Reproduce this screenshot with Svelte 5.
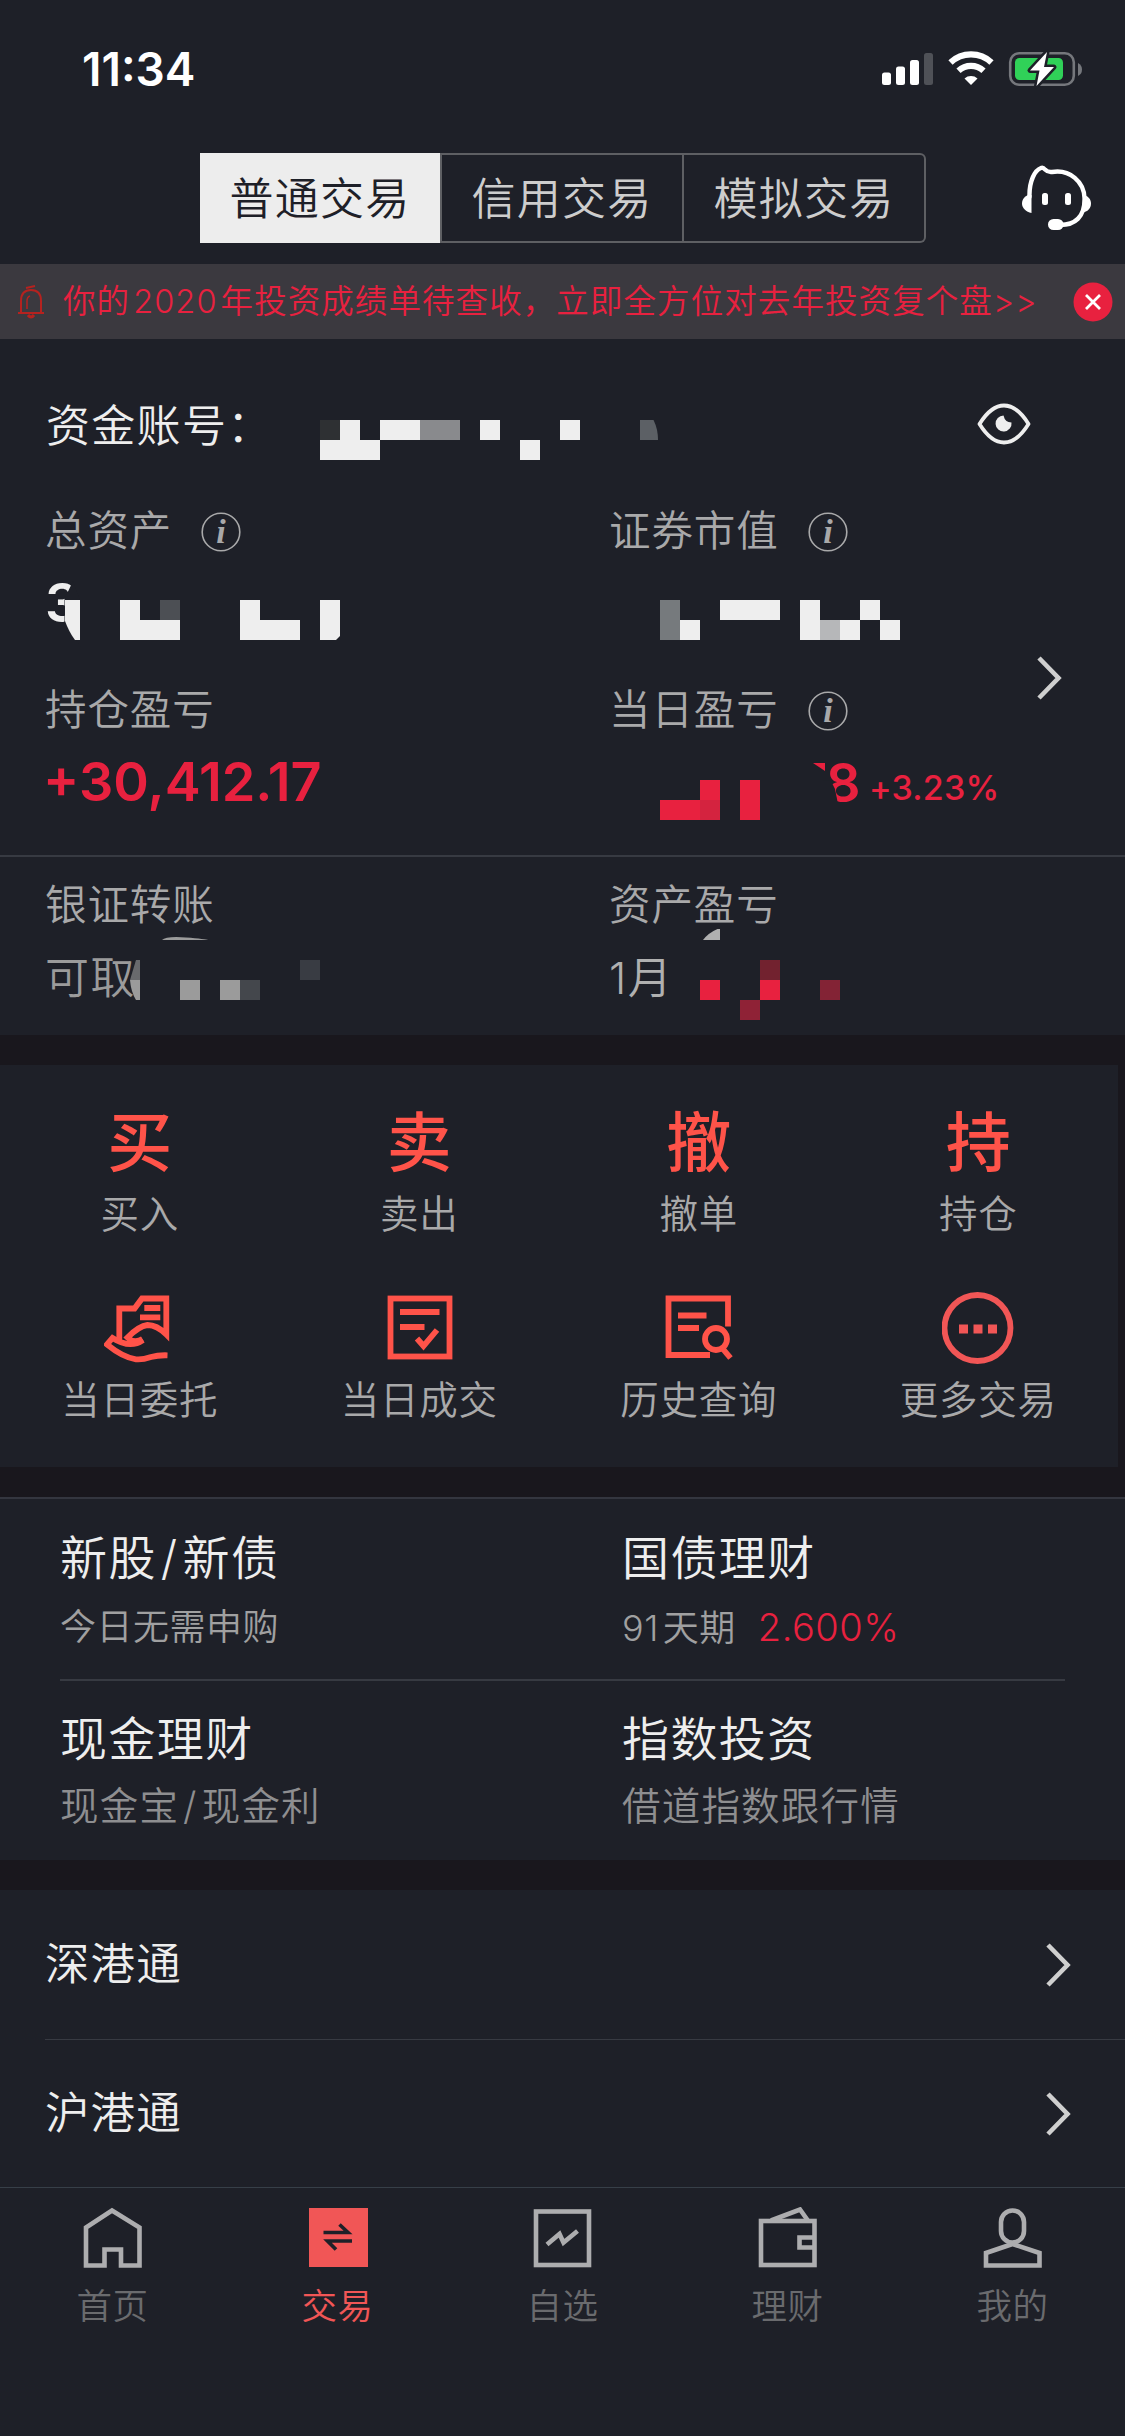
<script lang="ts">
  type Cell = [x: number, y: number, w: number, h: number, fill?: string];

  const modes = ['普通交易', '信用交易', '模拟交易'];
  let mode = $state('普通交易');

  // Masked figures are drawn as pixel blocks, in coordinates of their own row.
  const accountMask: Cell[] = [
    [0, 0, 20, 20, '#2e3033'],
    [20, 0, 20, 20],
    [60, 0, 40, 20],
    [100, 0, 40, 20, '#898a8d'],
    [160, 0, 20, 20],
    [240, 0, 20, 20],
    [0, 20, 60, 20],
    [200, 20, 20, 20],
  ];
  const totalMask: Cell[] = [
    [75, 45, 20, 40],
    [95, 65, 40, 20],
    [115, 45, 20, 20, '#4c4f54'],
    [195, 45, 20, 40],
    [215, 65, 40, 20],
  ];
  const marketMask: Cell[] = [
    [51, 45, 20, 40, '#767a7d'],
    [71, 65, 20, 20],
    [111, 45, 60, 20],
    [191, 45, 20, 40],
    [211, 65, 20, 20, '#b6b7b9'],
    [231, 65, 20, 20],
    [251, 45, 20, 20],
    [271, 65, 20, 20],
  ];
  const dayMask: Cell[] = [
    [91, 46, 20, 20],
    [51, 66, 40, 20],
    [91, 66, 20, 20, '#d4233f'],
    [131, 46, 20, 40],
  ];
  const cashMask: Cell[] = [
    [135, 51, 20, 20],
    [175, 51, 20, 20],
    [195, 51, 20, 20, '#44474c'],
    [255, 31, 20, 20, '#393c43'],
  ];
  const monthMask: Cell[] = [
    [91, 51, 20, 20],
    [151, 31, 20, 20, '#72222f'],
    [151, 51, 20, 20],
    [131, 71, 20, 20, '#8f2236'],
    [211, 51, 20, 20, '#832335'],
  ];

  const actions = [
    { glyph: '买', label: '买入' },
    { glyph: '卖', label: '卖出' },
    { glyph: '撤', label: '撤单' },
    { glyph: '持', label: '持仓' },
    { icon: 'order', label: '当日委托' },
    { icon: 'deal', label: '当日成交' },
    { icon: 'history', label: '历史查询' },
    { icon: 'more', label: '更多交易' },
  ];

  const products = [
    [
      { title: '新股/新债', note: '今日无需申购' },
      { title: '国债理财', note: '91天期', rate: '2.600%' },
    ],
    [
      { title: '现金理财', note: '现金宝/现金利' },
      { title: '指数投资', note: '借道指数跟行情' },
    ],
  ];

  const links = ['深港通', '沪港通'];

  const navs = [
    { icon: 'home', label: '首页' },
    { icon: 'trade', label: '交易' },
    { icon: 'chart', label: '自选' },
    { icon: 'wallet', label: '理财' },
    { icon: 'me', label: '我的' },
  ];
  let nav = $state('trade');

  // Split off digits and slashes so they get some air next to the hanzi.
  const parts = (s: string) => s.split(/(\d+|\/)/).filter(Boolean);
</script>

{#snippet spaced(s: string)}{#each parts(s) as p, i}{#if /^[\d/]/.test(p)}<i class:lead={i === 0}>{p}</i>{:else}{p}{/if}{/each}{/snippet}

{#snippet cells(list: Cell[])}
  {#each list as [x, y, w, h, fill]}
    <rect {x} {y} width={w} height={h} fill={fill ?? 'currentColor'} shape-rendering="crispEdges" />
  {/each}
{/snippet}

{#snippet info()}
  <svg class="info" width="40" height="40" viewBox="0 0 40 40">
    <circle cx="20" cy="20" r="18.8" fill="none" stroke="currentColor" stroke-width="1.6" />
    <text x="20" y="31" text-anchor="middle">i</text>
  </svg>
{/snippet}

{#snippet chevron()}
  <svg class="chevron" width="27" height="44" viewBox="0 0 27 44">
    <path d="M2 2 L21.500 22 L2 42" fill="none" stroke="#cfcfcf" stroke-width="4.600" />
  </svg>
{/snippet}

<main>
  <div class="status">
    <span class="time">11:34</span>
    <svg width="202" height="40" viewBox="0 0 202 40">
      <g fill="#fff">
        <rect x="2" y="23.500" width="9" height="12.500" rx="2.500" />
        <rect x="16" y="17.500" width="9" height="18.500" rx="2.500" />
        <rect x="30" y="11" width="9" height="25" rx="2.500" />
        <rect x="44" y="4" width="9" height="32" rx="2.500" opacity="0.22" />
        <path d="M91 36 L84.500 29.500 A 10 10 0 0 1 97.500 29.500 Z" />
      </g>
      <g fill="none" stroke="#fff" stroke-width="6.200">
        <path d="M78.500 21.800 A 18.500 18.500 0 0 1 103.500 21.800" />
        <path d="M70.500 13.500 A 30 30 0 0 1 111.500 13.500" />
      </g>
      <rect x="130.200" y="4.200" width="63.600" height="31.600" rx="9" fill="none" stroke="#75777c" stroke-width="2.600" />
      <path d="M198 14 v13 q4 -2 4 -6.500 t-4 -6.500z" fill="#75777c" />
      <rect x="135" y="9" width="48" height="22" rx="4.500" fill="#30d158" />
      <path
        d="M167 3 L150 21.500 H159.500 L156.500 37 L174 18 H164 Z"
        fill="#fff"
        stroke="#1e2028"
        stroke-width="5"
        stroke-linejoin="round"
        paint-order="stroke"
      />
    </svg>
  </div>

  <header>
    <div class="modes">
      {#each modes as m (m)}
        <button class:active={mode === m} onclick={() => (mode = m)}>{m}</button>
      {/each}
    </div>
    <svg class="service" width="70" height="66" viewBox="0 0 70 66">
      <g fill="none" stroke="#fff" stroke-width="4.400" stroke-linejoin="round" stroke-linecap="round">
        <path d="M7.500 32 C7 16 13 5 19 3 Q21 2 23 4.500 Q26 7.500 30 7 C48 4 62 17 62.500 33 C63 52 53 60 38 60" />
      </g>
      <g fill="#fff">
        <path d="M9.500 30 V48 C4 47 0 43 0 38.500 C0 34 3 31 7 29.500 Z" />
        <path d="M61 29.500 C66 31 69 34 69 38.500 C69 43 66 46.500 61 47.500 Z" />
        <rect x="20" y="28" width="6" height="12" rx="2.500" />
        <rect x="43" y="28" width="6" height="12" rx="2.500" />
        <rect x="26" y="54" width="15.500" height="11" rx="5.500" />
      </g>
    </svg>
  </header>

  <div class="notice">
    <svg width="28" height="36" viewBox="0 0 28 36" fill="none" stroke="#b5221f" stroke-width="2">
      <path d="M4 28 V17 C4 9 8 6 14 6 C20 6 24 9 24 17 V28" />
      <path d="M1 29 H27" />
      <path d="M9 4 L18 2" />
      <path d="M10 25 V17 Q10 13 13 12" stroke-width="1.500" />
      <path d="M11 31 Q14 35 17 31" stroke-width="3" />
    </svg>
    <span class="msg">{@render spaced('你的2020年投资成绩单待查收，立即全方位对去年投资复个盘>>')}</span>
    <svg class="close" width="40" height="40" viewBox="0 0 40 40">
      <circle cx="20" cy="20" r="19.500" fill="#e8213f" />
      <path d="M13 13 L27 27 M27 13 L13 27" stroke="#fff" stroke-width="2.800" />
    </svg>
  </div>

  <section class="account">
    <div class="number">
      <span>资金账号：</span>
      <svg class="mask" width="340" height="80" viewBox="0 -36 340 80">
        {@render cells(accountMask)}
        <path d="M320 0 h13.500 q4.500 9 4.500 20 h-18z" fill="#5c6065" />
      </svg>
      <svg class="eye" width="54" height="42" viewBox="0 0 54 42">
        <path
          d="M2.500 21 Q14 2.500 27 2.500 T51.500 21 Q40 39.500 27 39.500 T2.500 21z"
          fill="none"
          stroke="#eee"
          stroke-width="3.800"
          stroke-linejoin="round"
        />
        <path d="M26.500 12.500 A8 8 0 1 0 34.500 19.500 Q28 19.500 26.500 12.500z" fill="#eee" />
      </svg>
    </div>

    <div class="assets">
      <div class="col left">
        <div class="label">总资产 {@render info()}</div>
        <svg class="mask" width="500" height="94" viewBox="0 0 500 94">
          <text x="0" y="67" class="big">3</text>
          <path d="M28 26 L36 48 V92 L19 67.500 L19.500 66 V44 Z" fill="#1e2028" />
          <path d="M20 45 H35 V85 H30 Q24 77 20 66 Z" fill="currentColor" />
          {@render cells(totalMask)}
          <path d="M275 45 h20 v36 l-4 4 h-16z" fill="currentColor" />
        </svg>
        <div class="label second">持仓盈亏</div>
        <div class="profit">+30,412.17</div>
      </div>
      <div class="col">
        <div class="label">证券市值 {@render info()}</div>
        <svg class="mask" width="400" height="94" viewBox="0 0 400 94">
          {@render cells(marketMask)}
        </svg>
        <div class="label second">当日盈亏 {@render info()}</div>
        <svg class="mask up" width="400" height="96" viewBox="0 0 400 96">
          {@render cells(dayMask)}
          <path d="M204 29 h12 v8z" fill="currentColor" />
          <text x="217" y="67.500" class="big">8</text>
          <path d="M214 46 L222 47 L226 55 L229 70 L214 70 Z" fill="#1e2028" />
          <text x="260" y="66" class="pct">+3.23%</text>
        </svg>
      </div>
      {@render chevron()}
    </div>
  </section>

  <section class="transfer">
    <div class="col left">
      <div class="label">银证转账</div>
      <svg class="mask gray" width="500" height="90" viewBox="0 0 500 90">
        <path d="M117 11 q4 -4 24 -2.500 t22 2.500z" fill="currentColor" />
        <text x="0" y="65" class="mid">可取</text>
        <path d="M91 31 h4 v20 h-10z" fill="#696a6d" />
        <path d="M85 51 h10 v20 h-4 q-5 -8 -6 -20z" fill="currentColor" />
        {@render cells(cashMask)}
      </svg>
    </div>
    <div class="col">
      <div class="label">资产盈亏</div>
      <svg class="mask up" width="400" height="91" viewBox="0 0 400 91">
        <path d="M94 11 q6 -8 17 -12 v12z" fill="#b0b0b0" />
        <text x="0" y="65" class="mid light">1月</text>
        {@render cells(monthMask)}
      </svg>
    </div>
  </section>

  <section class="actions">
    {#each actions as a (a.label)}
      <div class="action">
        <div class="pic">
          {#if a.glyph}
            {a.glyph}
          {:else if a.icon === 'order'}
            <svg width="72" height="72" viewBox="0 0 72 72">
              <path d="M15.300 48 V16.500 H30.500 L38 6.500 H62.300 V42.500 Q53 33 43.500 33 Q35 34 23.500 45.500 Q30 52 38.500 47" />
              <path d="M39 48 Q26 57 8.500 46 L3 52.500 Q19 65.500 32 67.300 Q38 68 47 65 Q54 63 63.500 63.300" />
              <path d="M40.300 16 H56.300 M36 25.300 H56.300" />
            </svg>
          {:else if a.icon === 'deal'}
            <svg width="72" height="72" viewBox="0 0 72 72">
              <rect x="7.500" y="6.500" width="59" height="58" />
              <path d="M17 20 H56.500 M17 35 H41.500 M34 46.500 L40.500 54 L54 38" />
            </svg>
          {:else if a.icon === 'history'}
            <svg width="72" height="72" viewBox="0 0 72 72">
              <path d="M65 34.500 V6.500 H5.500 V63 H47" />
              <path d="M15 23.500 H43.500 M15 36 H36" />
              <circle cx="53" cy="47" r="11" />
              <path d="M59.500 56.500 L67.500 66" />
            </svg>
          {:else}
            <svg width="72" height="72" viewBox="0 0 72 72" class="more">
              <circle cx="35.500" cy="36" r="33" />
              <path class="dots" d="M17 37 h9 M31.500 37 h9 M46 37 h9" />
            </svg>
          {/if}
        </div>
        <div class="name">{a.label}</div>
      </div>
    {/each}
  </section>

  <section class="products">
    {#each products as row}
      <div class="row">
        {#each row as p (p.title)}
          <div class="product">
            <div class="title">{@render spaced(p.title)}</div>
            <div class="note">{@render spaced(p.note)}{#if p.rate}<b>{p.rate}</b>{/if}</div>
          </div>
        {/each}
      </div>
    {/each}
  </section>

  <section class="links">
    {#each links as l (l)}
      <div class="link">
        <span>{l}</span>
        {@render chevron()}
      </div>
    {/each}
  </section>

  <nav>
    {#each navs as n (n.icon)}
      <button class:active={nav === n.icon} onclick={() => (nav = n.icon)}>
        <svg width="60" height="62" viewBox="0 0 60 62">
          {#if n.icon === 'home'}
            <path d="M3 58.500 V20.500 L29 3.500 L56.500 20.500 V58.500 H38 V42.500 H21.500 V58.500 Z" />
          {:else if n.icon === 'trade'}
            <rect x="1" y="1" width="59" height="59" fill="#f15656" stroke="none" />
            <path d="M15.500 25.500 H40 L31.500 17.500 M44 34 H19.500 L28 42.500" stroke="#1e2028" stroke-width="3.600" />
          {:else if n.icon === 'chart'}
            <rect x="3" y="4.500" width="53" height="53.500" />
            <path d="M14 37.500 L26.500 27 L30.500 35.500 L44.500 24" stroke-width="4.600" />
          {:else if n.icon === 'wallet'}
            <rect x="3" y="14" width="53.500" height="44" />
            <path d="M13 13.500 L42 2.500 L49.500 13" />
            <path d="M56.500 30.500 H41.500 V40.500 H56.500" />
          {:else}
            <rect x="18" y="3.500" width="23" height="32" rx="11.500" />
            <path d="M29.500 37 L56.500 46 V58.500 H3 V46 Z" />
          {/if}
        </svg>
        <span>{n.label}</span>
      </button>
    {/each}
  </nav>
</main>

<style>
  :global(body) {
    margin: 0;
    background: #1e2028;
  }
  main {
    width: 1125px;
    height: 2436px;
    overflow: hidden;
    display: flex;
    flex-direction: column;
    background: #1e2028;
    color: #eee;
    font-family: Inter, 'Noto Sans CJK SC', sans-serif;
    font-weight: 350;
    line-height: 1;
  }
  main > * {
    box-sizing: border-box;
    flex: none;
  }
  svg {
    display: block;
    flex: none;
  }
  button {
    border: 0;
    padding: 0;
    background: none;
    color: inherit;
    font: inherit;
  }
  i {
    font-style: normal;
    margin: 0 4px;
  }
  i.lead {
    margin-left: 0;
  }

  .status {
    height: 138px;
    padding: 0 43px 0 82px;
    display: flex;
    justify-content: space-between;
    align-items: center;
    color: #fff;
  }
  .time {
    font-size: 46px;
    font-weight: 600;
  }

  header {
    height: 126px;
    padding: 15px 33px 0 200px;
    display: flex;
    justify-content: space-between;
    align-items: flex-start;
  }
  .modes {
    display: flex;
    box-sizing: border-box;
    width: 726px;
    height: 90px;
    border: 2px solid #5e5f63;
    border-left: 0;
    border-radius: 0 6px 6px 0;
  }
  .modes button {
    flex: 1;
    padding-top: 2px;
    font-size: 44px;
    letter-spacing: 1.3px;
    color: #cdcdcd;
  }
  .modes button + button {
    border-left: 2px solid #5e5f63;
  }
  .modes button.active {
    margin: -2px 0;
    background: #ededed;
    color: #1e2028;
  }
  .service {
    margin-top: 12px;
  }

  .notice {
    height: 75px;
    padding: 0 12px 0 17px;
    display: flex;
    align-items: center;
    background: #3b393f;
    color: #e8213f;
  }
  .msg {
    margin: 2px 0 0 18px;
    font-size: 32.500px;
    letter-spacing: 1.080px;
    white-space: nowrap;
  }
  .msg i {
    margin: 0 3px;
  }
  .close {
    margin-left: auto;
  }

  .account {
    height: 516px;
  }
  .number {
    height: 170px;
    padding-left: 46px;
    display: flex;
    align-items: center;
    font-size: 44px;
    letter-spacing: 1.300px;
  }
  .number span {
    width: 274px;
    padding-top: 3px;
  }
  .eye {
    margin-left: 317px;
  }
  .assets {
    height: 338px;
    display: flex;
    align-items: center;
  }
  .col {
    align-self: stretch;
  }
  .left {
    width: 564px;
    padding-left: 45px;
  }
  .assets .col:not(.left) {
    width: 428px;
  }
  .label {
    height: 46px;
    display: flex;
    align-items: center;
    font-size: 41.500px;
    letter-spacing: 0.900px;
    color: #a9a9aa;
  }
  .second {
    margin-top: 39px;
  }
  .info {
    margin-left: 29px;
  }
  .info text {
    font: italic bold 34px 'Liberation Serif', serif;
    letter-spacing: 0;
    fill: currentColor;
  }
  .mask {
    color: #eee;
  }
  .mask.up {
    color: #e8213f;
  }
  .mask.gray {
    color: #9b9b9b;
  }
  .mask text {
    fill: currentColor;
  }
  .big,
  .profit {
    font-size: 54px;
    font-weight: 600;
  }
  .profit {
    height: 96px;
    margin-left: -2px;
    line-height: 96px;
    color: #e8213f;
  }
  .pct {
    font-size: 34px;
    font-weight: 500;
    letter-spacing: 0.200px;
  }
  .mid {
    font-size: 44px;
    letter-spacing: 1.500px;
  }
  .mask .light {
    fill: #b0b0b0;
  }

  .transfer {
    height: 180px;
    padding-top: 26px;
    border-top: 2px solid #373a42;
    display: flex;
  }

  .actions {
    height: 462px;
    padding: 35px 0 50px;
    border: solid #19171d;
    border-width: 30px 7px 30px 0;
    display: grid;
    grid-template-columns: repeat(4, 1fr);
    grid-template-rows: 186px 186px;
  }
  .action {
    display: flex;
    flex-direction: column;
    align-items: center;
  }
  .pic {
    height: 84px;
    display: flex;
    align-items: center;
    color: #ff5349;
    font-size: 65px;
    font-weight: 500;
  }
  .pic svg {
    fill: none;
    stroke: currentColor;
    stroke-width: 5.800px;
  }
  .pic .more {
    color: #f15656;
  }
  .pic .dots {
    stroke-width: 9px;
  }
  .name {
    height: 60px;
    line-height: 60px;
    font-size: 38.500px;
    letter-spacing: 0.800px;
    color: #a9a9aa;
  }

  .products {
    height: 363px;
    border-top: 2px solid #34363f;
    padding-left: 60px;
  }
  .row {
    display: flex;
    width: 1005px;
    height: 180px;
    box-sizing: border-box;
    padding-top: 28px;
  }
  .row + .row {
    padding-top: 27px;
    border-top: 2px solid #373a42;
  }
  .product:first-child {
    width: 562px;
  }
  .title {
    height: 62px;
    line-height: 62px;
    font-size: 47px;
    letter-spacing: 1.400px;
  }
  .note {
    height: 76px;
    line-height: 76px;
    font-size: 36px;
    letter-spacing: 0.500px;
    color: #a0a0a1;
  }
  .row + .row .note {
    height: 72px;
    line-height: 72px;
    font-size: 38.500px;
    letter-spacing: 1.200px;
    color: #8e8e90;
  }
  .note b {
    margin-left: 22px;
    font-size: 38px;
    font-weight: 350;
    color: #e8213f;
  }

  .links {
    border-top: 30px solid #19171d;
  }
  .link {
    height: 149px;
    margin-left: 45px;
    padding-right: 52px;
    display: flex;
    justify-content: space-between;
    align-items: center;
    font-size: 44.500px;
    letter-spacing: 1.100px;
  }
  .link + .link {
    box-sizing: border-box;
    height: 148px;
    border-top: 1px solid #373a42;
  }

  nav {
    flex: 1;
    border-top: 1px solid #373f48;
    display: flex;
  }
  nav button {
    flex: 1;
    padding-top: 19px;
    display: flex;
    flex-direction: column;
    align-items: center;
    color: #6a6b6e;
  }
  nav button.active {
    color: #f15656;
  }
  nav svg {
    fill: none;
    stroke: #adadaf;
    stroke-width: 4.600px;
  }
  nav span {
    margin-top: 17px;
    line-height: 42px;
    font-size: 35.500px;
    letter-spacing: 0.500px;
  }
</style>
